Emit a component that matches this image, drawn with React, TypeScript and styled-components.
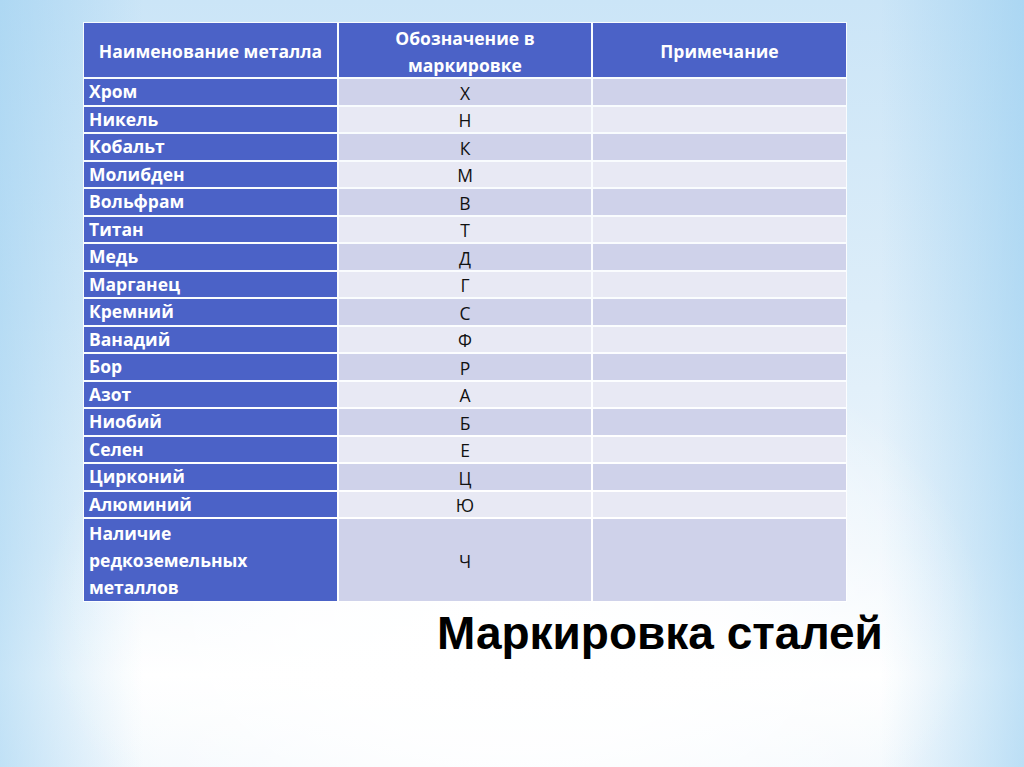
import React from 'react';
import styled, { createGlobalStyle } from 'styled-components';

const GlobalStyle = createGlobalStyle`
	html, body {
		margin: 0;
		padding: 0;
	}
	body {
		font-family: 'Open Sans', 'DejaVu Sans', sans-serif;
	}
`;

const Slide = styled.div`
	width: 1024px;
	height: 767px;
	overflow: hidden;
	box-sizing: border-box;
	padding: 22px 0 0 83px;
	display: flex;
	flex-direction: column;
	background:
		radial-gradient(ellipse 46% 40% at 50% 80%, rgba(255, 255, 255, 1) 0%, rgba(255, 255, 255, 0.85) 45%, rgba(255, 255, 255, 0) 100%),
		linear-gradient(90deg, rgba(150, 205, 240, 0.55) 0%, rgba(255, 255, 255, 0) 14%, rgba(255, 255, 255, 0) 86%, rgba(150, 205, 240, 0.6) 100%),
		linear-gradient(180deg, #cbe5f7 0%, #dcedf9 40%, #eef6fc 72%, #ffffff 88%, #f4f9fd 100%);
`;

const Table = styled.div`
	display: grid;
	grid-template-columns: 253px 252px 253px;
	grid-template-rows: 54px repeat(16, 25.5px) 82px;
	gap: 2px;
	width: 764px;
	padding: 1px;
	box-sizing: border-box;
	background: rgba(255, 255, 255, 0.85);
`;

const HeadCell = styled.div`
	background: #4b62c7;
	color: #ffffff;
	font-weight: 700;
	font-size: 17.5px;
	line-height: 27px;
	display: flex;
	align-items: center;
	justify-content: center;
	text-align: center;
	padding: 3px 14px 0;
`;

const NameCell = styled.div`
	background: #4b62c7;
	color: #ffffff;
	font-weight: 700;
	font-size: 17.5px;
	line-height: 27px;
	padding: 0 5px;
	display: flex;
	align-items: center;
`;

const Cell = styled.div<{ $odd: boolean }>`
	background: ${(p) => (p.$odd ? '#cfd2ea' : '#e8e9f4')};
	color: #111111;
	font-size: 17.5px;
	font-weight: 400;
	display: flex;
	align-items: center;
	justify-content: center;
	padding-top: 2px;
`;

const Title = styled.h1`
	margin: 1px 0 0 354px;
	font-family: 'Liberation Sans', Arial, sans-serif;
	font-weight: 700;
	font-size: 46px;
	line-height: 60px;
	color: #000000;
	white-space: nowrap;
`;

const rows: [string, string][] = [
	['Хром', 'Х'],
	['Никель', 'Н'],
	['Кобальт', 'К'],
	['Молибден', 'М'],
	['Вольфрам', 'В'],
	['Титан', 'Т'],
	['Медь', 'Д'],
	['Марганец', 'Г'],
	['Кремний', 'С'],
	['Ванадий', 'Ф'],
	['Бор', 'Р'],
	['Азот', 'А'],
	['Ниобий', 'Б'],
	['Селен', 'Е'],
	['Цирконий', 'Ц'],
	['Алюминий', 'Ю'],
	['Наличие редкоземельных металлов', 'Ч'],
];

export default function App() {
	return (
		<>
			<GlobalStyle />
			<Slide>
				<Table>
					<HeadCell>Наименование металла</HeadCell>
					<HeadCell>Обозначение в маркировке</HeadCell>
					<HeadCell>Примечание</HeadCell>
					{rows.map(([name, mark], i) => (
						<React.Fragment key={name}>
							<NameCell>{name}</NameCell>
							<Cell $odd={i % 2 === 0}>{mark}</Cell>
							<Cell $odd={i % 2 === 0} />
						</React.Fragment>
					))}
				</Table>
				<Title>Маркировка сталей</Title>
			</Slide>
		</>
	);
}
